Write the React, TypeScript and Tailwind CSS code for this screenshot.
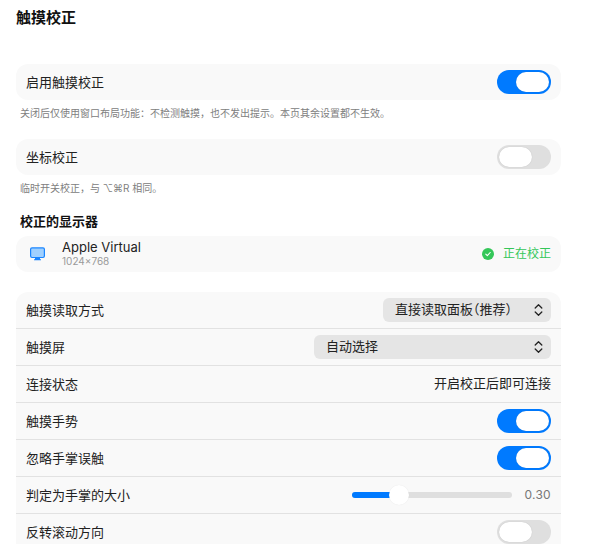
import type React from "react"

const Toggle: React.FC<{ on?: boolean }> = ({ on }) => (
  <div className={`flex h-6 w-[54px] items-center rounded-full p-0.5 ${on ? "justify-end bg-[#007aff]" : "justify-start bg-[#dfdfdf]"}`}>
    <div className="h-5 w-[33px] rounded-full bg-white shadow-[0_0_1px_rgba(0,0,0,0.2)]" />
  </div>
)

const UpDown = () => (
  <svg width="9" height="14" viewBox="0 0 9 14" fill="none" stroke="#222" strokeWidth="1.3" strokeLinecap="round" strokeLinejoin="round">
    <path d="M1.2 5 4.5 1.8 7.8 5" />
    <path d="M1.2 9 4.5 12.2 7.8 9" />
  </svg>
)

const Select: React.FC<{ label: string; width: string }> = ({ label, width }) => (
  <div className={`flex h-6 items-center justify-between rounded-md bg-[#e5e5e5] pl-3 pr-[8px] text-[#222] ${width}`}>
    <span className="[font-feature-settings:'halt']">{label}</span>
    <UpDown />
  </div>
)

const Row: React.FC<{ label: string; children?: React.ReactNode }> = ({ label, children }) => (
  <div className="flex h-9 shrink-0 items-center justify-between px-2.5">
    <span className="pt-px">{label}</span>
    {children}
  </div>
)

const Caption: React.FC<{ children: React.ReactNode }> = ({ children }) => (
  <p className="mt-[6px] h-[14px] pl-1 text-[10px] leading-[14px] text-[#808080]">{children}</p>
)

const Sep = () => <div className="h-px shrink-0 bg-[#e2e2e2]" />

export default function App() {
  return (
    <div
      className="h-[544px] w-[590px] overflow-hidden bg-white pl-4 pr-[29px] text-[13px] text-[#222]"
      style={{ fontFamily: 'Inter, "Noto Sans CJK SC", sans-serif' }}
    >
      <h1 className="mt-[8px] h-5 text-[15px] font-bold leading-5 text-[#111]">触摸校正</h1>

      <div className="mt-[36px] rounded-xl bg-[#f9f9f9]">
        <Row label="启用触摸校正">
          <Toggle on />
        </Row>
      </div>
      <Caption>关闭后仅使用窗口布局功能：不检测触摸，也不发出提示。本页其余设置都不生效。</Caption>

      <div className="mt-[19px] rounded-xl bg-[#f9f9f9]">
        <Row label="坐标校正">
          <Toggle />
        </Row>
      </div>
      <Caption>临时开关校正，与 ⌥⌘R 相同。</Caption>

      <h2 className="mt-[16px] h-5 pl-1 text-[13px] font-semibold leading-5 text-[#111]">校正的显示器</h2>

      <div className="mt-[5px] flex h-9 items-center justify-between rounded-xl bg-[#f9f9f9] pl-3.5 pr-2.5">
        <div className="flex items-center gap-[17px]">
          <svg width="15" height="14" viewBox="0 0 15 14">
            <rect x="0.6" y="0.9" width="13.8" height="9.6" rx="1.4" fill="#9fd0ff" stroke="#1a85ff" strokeWidth="1.2" />
            <path d="M5 11h5v1.2h1v1H4v-1h1z" fill="#1a85ff" />
          </svg>
          <div className="flex flex-col pb-px">
            <span className="text-[13px] leading-[15px]">Apple Virtual</span>
            <span className="text-[10px] leading-[12px] text-[#999]">1024×768</span>
          </div>
        </div>
        <div className="flex items-center gap-[9px] text-[12px] text-[#34c759]">
          <svg width="12" height="12" viewBox="0 0 12 12">
            <circle cx="6" cy="6" r="6" fill="#34c759" />
            <path d="M3.8 6.2 5.3 7.7 8.2 4.5" fill="none" stroke="#fff" strokeWidth="1.1" strokeLinecap="round" strokeLinejoin="round" />
          </svg>
          <span>正在校正</span>
        </div>
      </div>

      <div className="mt-[20px] flex flex-col rounded-t-xl bg-[#f9f9f9]">
        <Row label="触摸读取方式">
          <Select label="直接读取面板（推荐）" width="w-[168px]" />
        </Row>
        <Sep />
        <Row label="触摸屏">
          <Select label="自动选择" width="w-[237px]" />
        </Row>
        <Sep />
        <Row label="连接状态">
          <span>开启校正后即可连接</span>
        </Row>
        <Sep />
        <Row label="触摸手势">
          <Toggle on />
        </Row>
        <Sep />
        <Row label="忽略手掌误触">
          <Toggle on />
        </Row>
        <Sep />
        <Row label="判定为手掌的大小">
          <div className="flex items-center gap-2.5">
            <div className="relative flex h-1.5 w-40 rounded-full bg-[#dfdfdf]">
              <div className="h-1.5 w-[42px] rounded-full bg-[#007aff]" />
              <div className="absolute left-[37px] top-[-7px] h-5 w-5 rounded-full bg-white shadow-[0_0_1px_rgba(0,0,0,0.1)]" />
            </div>
            <span className="w-[29px] text-right text-[12px] tracking-[0.3px] text-[#777]">0.30</span>
          </div>
        </Row>
        <Sep />
        <Row label="反转滚动方向">
          <Toggle />
        </Row>
      </div>
    </div>
  )
}
